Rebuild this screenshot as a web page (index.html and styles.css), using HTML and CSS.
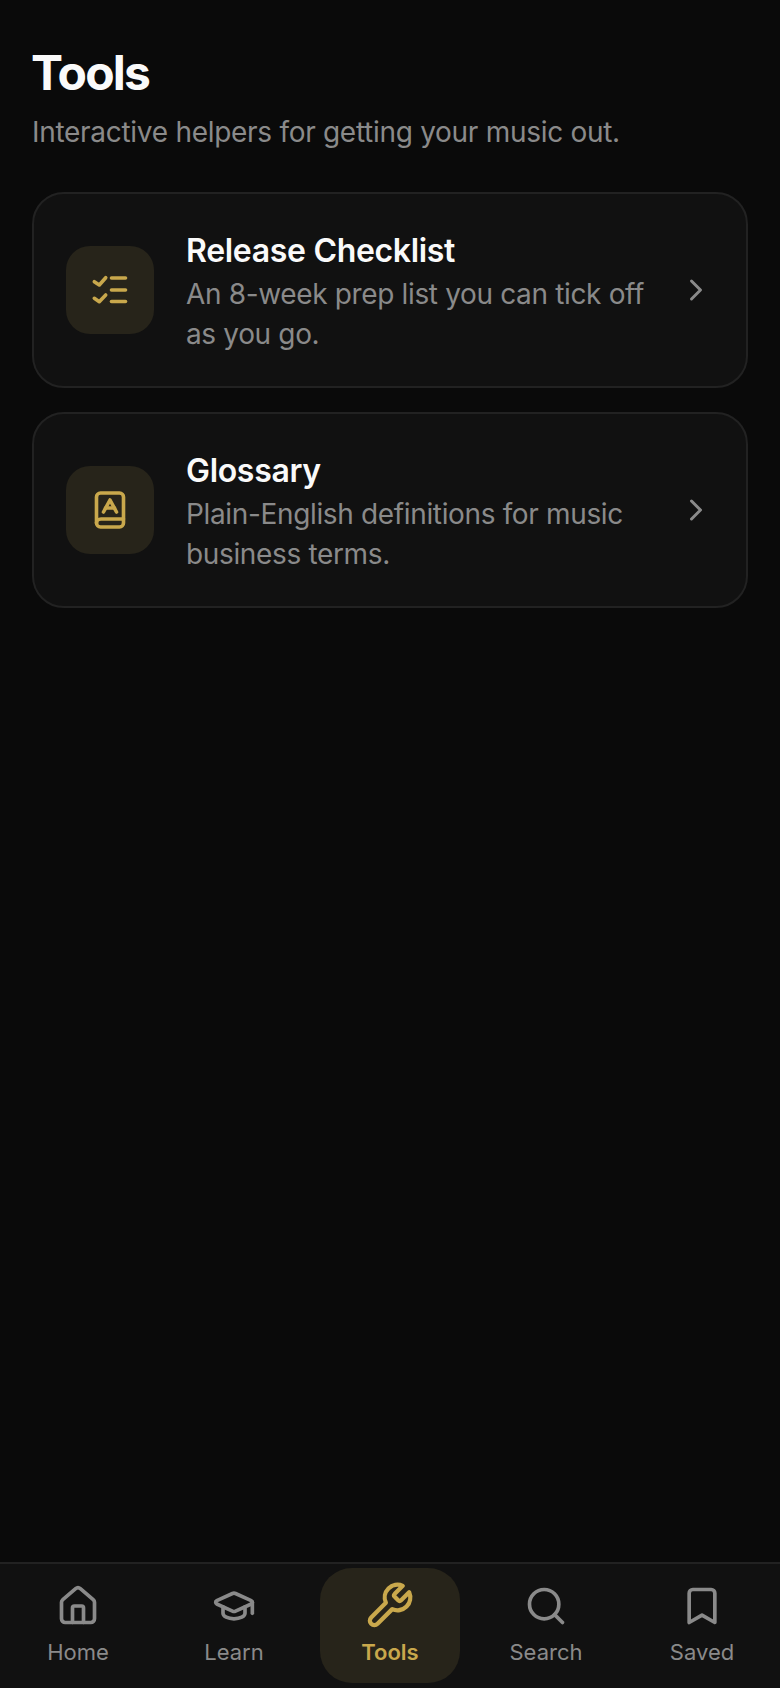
FILE: index.html
```html
<!DOCTYPE html>
<html lang="en">
<head>
<meta charset="utf-8">
<title>Tools</title>
<link rel="stylesheet" href="styles.css">
</head>
<body>
<div class="app">
  <main class="content">
    <h1 class="page-title">Tools</h1>
    <p class="page-sub">Interactive helpers for getting your music out.</p>
    <div class="cards">
      <a class="card">
        <span class="tile">
          <svg class="tile-icon" viewBox="0 0 40 40"><path d="M4.3 11.7 9.3 15 15.7 7.7"/><path d="M4.3 28.3 9.3 31.7 15.7 25"/><path d="M21.5 8H35.5"/><path d="M21.5 20H35.5"/><path d="M21.5 31.5H35.5"/></svg>
        </span>
        <span class="card-text">
          <span class="card-title">Release Checklist</span>
          <span class="card-desc">An 8-week prep list you can tick off as you go.</span>
        </span>
        <svg class="chevron" viewBox="0 0 24 24"><path d="m9 18 6-6-6-6"/></svg>
      </a>
      <a class="card">
        <span class="tile">
          <svg class="tile-icon" viewBox="0 0 40 40"><rect x="6.5" y="3" width="27" height="34" rx="4"/><path d="M33.5 29H11a4.5 4 0 0 0-4.5 4"/><path d="M13.5 22 20 10l6.500 12"/><path d="M15.500 18H24.500"/></svg>
        </span>
        <span class="card-text">
          <span class="card-title">Glossary</span>
          <span class="card-desc">Plain-English definitions for music business terms.</span>
        </span>
        <svg class="chevron" viewBox="0 0 24 24"><path d="m9 18 6-6-6-6"/></svg>
      </a>
    </div>
  </main>
  <nav class="tabbar">
    <a class="tab">
      <svg class="tab-icon" viewBox="0 0 24 24"><path d="M15 21v-8a1 1 0 0 0-1-1h-4a1 1 0 0 0-1 1v8"/><path d="M3 10a2 2 0 0 1 .709-1.528l7-5.999a2 2 0 0 1 2.582 0l7 5.999A2 2 0 0 1 21 10v9a2 2 0 0 1-2 2H5a2 2 0 0 1-2-2z"/></svg>
      <span>Home</span>
    </a>
    <a class="tab">
      <svg class="tab-icon" viewBox="0 0 24 24"><path d="M21.420 10.922a1 1 0 0 0-.019-1.838L12.830 5.180a2 2 0 0 0-1.660 0L2.600 9.080a1 1 0 0 0 0 1.832l8.570 3.908a2 2 0 0 0 1.660 0z"/><path d="M22 10v6"/><path d="M6 12.500V16a6 3 0 0 0 12 0v-3.500"/></svg>
      <span>Learn</span>
    </a>
    <a class="tab tab-active">
      <svg class="tab-icon" viewBox="0 0 24 24"><path d="M14.700 6.300a1 1 0 0 0 0 1.400l1.600 1.600a1 1 0 0 0 1.400 0l3.770-3.770a6 6 0 0 1-7.940 7.940l-6.910 6.910a2.120 2.120 0 0 1-3-3l6.910-6.910a6 6 0 0 1 7.940-7.940l-3.760 3.760z"/></svg>
      <span>Tools</span>
    </a>
    <a class="tab">
      <svg class="tab-icon" viewBox="0 0 24 24"><circle cx="11" cy="11" r="8"/><path d="m21 21-4.300-4.300"/></svg>
      <span>Search</span>
    </a>
    <a class="tab">
      <svg class="tab-icon" viewBox="0 0 24 24"><path d="m19 21-7-4-7 4V5a2 2 0 0 1 2-2h10a2 2 0 0 1 2 2v16z"/></svg>
      <span>Saved</span>
    </a>
  </nav>
</div>
</body>
</html>
```
FILE: styles.css
```css
* { box-sizing: border-box; }
html, body { margin: 0; height: 100%; }
body {
  background: #0a0a0a;
  color: #fafafa;
  font-family: Inter, "Liberation Sans", sans-serif;
}
svg { fill: none; stroke: currentColor; stroke-linecap: round; stroke-linejoin: round; flex: none; }
.app { height: 100vh; display: flex; flex-direction: column; }
.content { flex: 1; padding: 40px 32px 0; }
.page-title { margin: 0 0 0 -1px; font-size: 48px; line-height: 66px; font-weight: 700; letter-spacing: -1.8px; }
.page-sub { margin: 5px 0 0; font-size: 28px; line-height: 42px; color: #8a8a8a; letter-spacing: -0.29px; }
.cards { margin-top: 39px; display: flex; flex-direction: column; gap: 24px; }
.card {
  display: flex; align-items: center; gap: 32px;
  padding: 32px; background: #111; border: 2px solid #222; border-radius: 32px;
}
.tile {
  width: 88px; height: 88px; flex: none; border-radius: 24px;
  background: #27241a; color: #c9a84c;
  display: flex; align-items: center; justify-content: center;
}
.tile-icon { width: 40px; height: 40px; stroke-width: 3.6; }
.card-text { flex: 1; display: flex; flex-direction: column; min-width: 0; margin-right: -8px; }
.card-title { font-size: 32px; line-height: 48px; font-weight: 600; letter-spacing: -0.32px; padding-top: 1px; margin-bottom: -1px; }
.card-desc { font-size: 28px; line-height: 40px; color: #8a8a8a; letter-spacing: -0.35px; }
.chevron { width: 36px; height: 36px; stroke-width: 2; color: #8a8a8a; }
.tabbar {
  height: 126px; display: grid; grid-template-columns: repeat(5, 1fr);
  padding: 4px 0 5px; background: #111; border-top: 2px solid #222;
}
.tab {
  margin: 0 8px; border-radius: 32px; color: #8a8a8a;
  display: flex; flex-direction: column; align-items: center; justify-content: center;
  gap: 8px; font-size: 22px; line-height: 32px; font-weight: 400;
}
.tab-icon { width: 44px; height: 44px; stroke-width: 2; }
.tab-active { background: #27241a; color: #c9a84c; font-weight: 600; }
.tab-active .tab-icon { transform: translateX(-1px) scale(1.16); }
```
